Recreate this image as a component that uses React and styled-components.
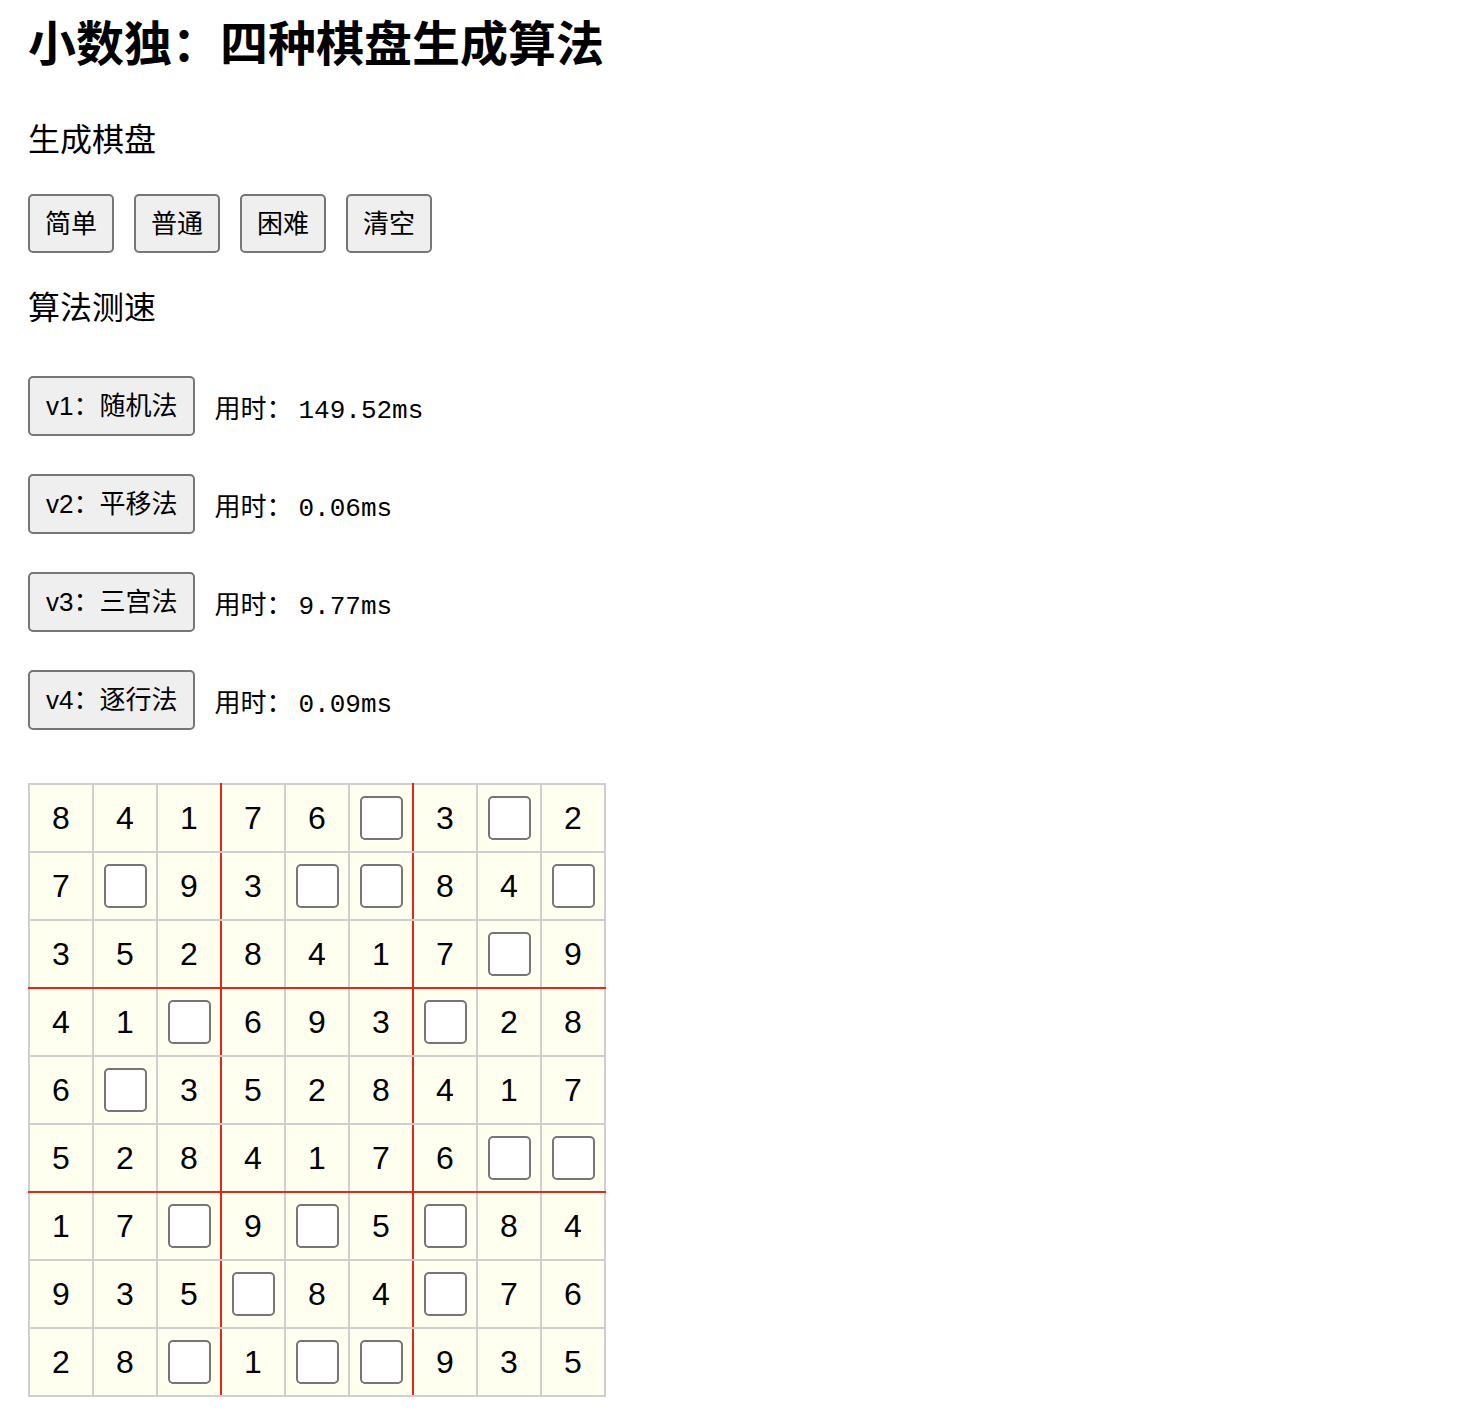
import styled, { createGlobalStyle } from "styled-components";

const GlobalStyle = createGlobalStyle`
  body {
    margin: 0;
    background: #fff;
    color: #000;
    font-family: "Liberation Sans", "Noto Sans CJK SC", sans-serif;
  }
`;

const Page = styled.div`
  display: flex;
  flex-direction: column;
  align-items: flex-start;
  padding: 17px 28px 30px;
`;

const Title = styled.h1`
  margin: 0;
  font-size: 48px;
  line-height: 56px;
  font-weight: 700;
`;

const Section = styled.div`
  margin-top: ${(p) => p.$top}px;
  font-size: 32px;
  line-height: 40px;
`;

const ButtonRow = styled.div`
  display: flex;
  gap: 20px;
  margin-top: 34px;
`;

const Button = styled.button`
  font-family: "Liberation Sans", "Noto Sans CJK SC", sans-serif;
  font-size: 26px;
  line-height: 36px;
  color: #000;
  background: #efefef;
  border: 2px solid #767676;
  border-radius: 5px;
  padding: ${(p) => (p.$wide ? "10px 16px" : "10px 15px 9px")};
  cursor: pointer;

  &:hover {
    background: #e5e5e5;
  }
`;

const SpeedList = styled.div`
  display: flex;
  flex-direction: column;
  gap: 38px;
  margin-top: 48px;
`;

const SpeedRow = styled.div`
  display: flex;
  align-items: center;
  gap: 19px;
`;

const Timing = styled.span`
  font-size: 26px;
  padding-top: 2px;
`;

const Mono = styled.span`
  font-family: "Liberation Mono", "Noto Sans CJK SC", monospace;
  font-size: 26px;
  margin-left: 6px;
`;

const Board = styled.table`
  margin-top: 53px;
  border-collapse: collapse;
`;

const Cell = styled.td`
  width: 62px;
  height: 66px;
  padding: 0;
  text-align: center;
  vertical-align: middle;
  background: #fffff0;
  border: 2px solid #cfcfcf;
  font-size: 32px;
  &:nth-child(3),
  &:nth-child(6) {
    border-right-color: #e5261b;
  }
  tr:nth-child(3) > &,
  tr:nth-child(6) > & {
    border-bottom-color: #e5261b;
  }
`;

const Slot = styled.input`
  display: block;
  margin: 0 auto;
  box-sizing: border-box;
  width: 43px;
  height: 44px;
  border: 2px solid #767676;
  border-radius: 5px;
  background: #fff;
  font-size: 28px;
  text-align: center;
  padding: 0;
`;

const board = [
  "841760302",
  "709300840",
  "352841709",
  "410693028",
  "603528417",
  "528417600",
  "170905084",
  "935084076",
  "280100935",
];

const algorithms = [
  { name: "v1：随机法", time: "149.52ms" },
  { name: "v2：平移法", time: "0.06ms" },
  { name: "v3：三宫法", time: "9.77ms" },
  { name: "v4：逐行法", time: "0.09ms" },
];

const App = () => (
  <>
    <GlobalStyle />
    <Page>
      <Title>小数独：四种棋盘生成算法</Title>
      <Section $top={47}>生成棋盘</Section>
      <ButtonRow>
        <Button>简单</Button>
        <Button>普通</Button>
        <Button>困难</Button>
        <Button>清空</Button>
      </ButtonRow>
      <Section $top={35}>算法测速</Section>
      <SpeedList>
        {algorithms.map((a) => (
          <SpeedRow key={a.name}>
            <Button $wide>{a.name}</Button>
            <Timing>
              用时：<Mono>{a.time}</Mono>
            </Timing>
          </SpeedRow>
        ))}
      </SpeedList>
      <Board>
        <tbody>
          {board.map((row, r) => (
            <tr key={r}>
              {row.split("").map((d, c) => (
                <Cell key={c}>{d === "0" ? <Slot type="text" /> : d}</Cell>
              ))}
            </tr>
          ))}
        </tbody>
      </Board>
    </Page>
  </>
);

export default App;
